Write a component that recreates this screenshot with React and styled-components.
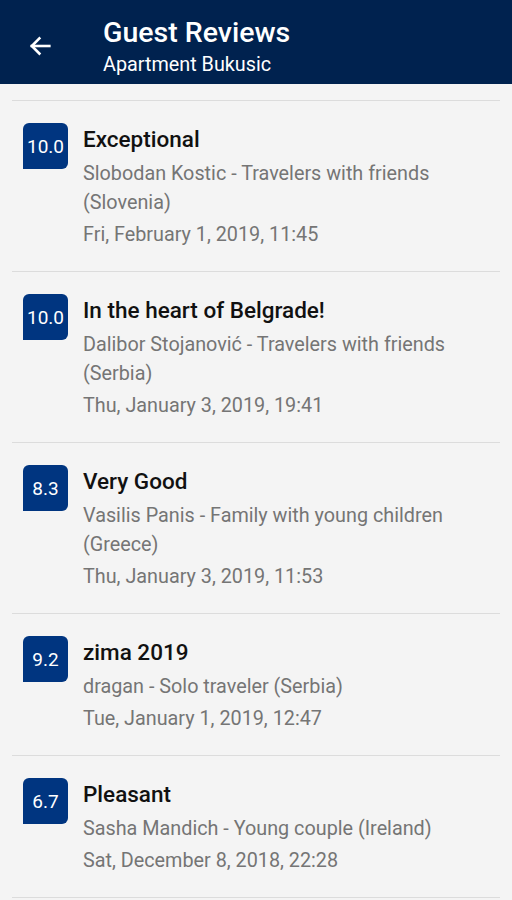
import React from "react";
import styled, { createGlobalStyle } from "styled-components";

const Global = createGlobalStyle`
  html, body { margin: 0; padding: 0; background: #f4f4f4; }
  body { font-family: Roboto, "Noto Sans", Arial, sans-serif; }
  * { box-sizing: border-box; }
`;

const Page = styled.div`
  width: 512px;
  min-height: 900px;
  background: #f4f4f4;
`;

const Header = styled.header`
  height: 84px;
  background: #00224f;
  display: flex;
  align-items: flex-start;
  color: #fff;
`;

const BackButton = styled.button`
  width: 103px;
  height: 84px;
  border: 0;
  background: transparent;
  padding: 8px 0 0 26px;
  display: flex;
  align-items: center;
  color: #fff;
`;

const TitleBlock = styled.div`
  display: flex;
  flex-direction: column;
  padding-top: 17px;
`;

const Title = styled.h1`
  margin: 0;
  font-size: 28.5px;
  font-weight: 500;
  line-height: 32px;
`;

const Subtitle = styled.div`
  font-size: 19.8px;
  line-height: 26px;
  margin-top: 3px;
`;

const List = styled.div`
  margin: 16px 12px 0;
  border-top: 1px solid #dcdcdc;
`;

const Row = styled.div`
  display: flex;
  gap: 15px;
  padding: 21px 12px 21px 11px;
  border-bottom: 1px solid #dcdcdc;
`;

const Badge = styled.div`
  flex: 0 0 45px;
  width: 45px;
  height: 46px;
  background: #003580;
  color: #fff;
  border-radius: 6px 6px 6px 0;
  display: flex;
  align-items: center;
  justify-content: center;
  font-size: 19px;
  margin-top: 1px;
`;

const Body = styled.div`
  flex: 1;
  display: flex;
  flex-direction: column;
`;

const ReviewTitle = styled.div`
  font-size: 22.5px;
  font-weight: 500;
  color: #111;
  line-height: 34px;
`;

const Guest = styled.div`
  font-size: 19.8px;
  color: #757575;
  line-height: 29px;
  margin-top: 3px;
`;

const DateLine = styled.div`
  font-size: 19.8px;
  color: #757575;
  line-height: 30px;
  margin-top: 3px;
`;

const reviews = [
  { score: "10.0", title: "Exceptional", who: "Slobodan Kostic - Travelers with friends (Slovenia)", date: "Fri, February 1, 2019, 11:45" },
  { score: "10.0", title: "In the heart of Belgrade!", who: "Dalibor Stojanović - Travelers with friends (Serbia)", date: "Thu, January 3, 2019, 19:41" },
  { score: "8.3", title: "Very Good", who: "Vasilis Panis - Family with young children (Greece)", date: "Thu, January 3, 2019, 11:53" },
  { score: "9.2", title: "zima 2019", who: "dragan - Solo traveler (Serbia)", date: "Tue, January 1, 2019, 12:47" },
  { score: "6.7", title: "Pleasant", who: "Sasha Mandich - Young couple (Ireland)", date: "Sat, December 8, 2018, 22:28" },
];

export default function App() {
  return (
    <Page>
      <Global />
      <Header>
        <BackButton aria-label="Back">
          <svg width="28" height="28" viewBox="0 0 24 24" fill="none" stroke="#fff" strokeWidth="2.2" strokeLinecap="square">
            <path d="M20 12H5" />
            <path d="M11.5 5.5L5 12l6.5 6.5" />
          </svg>
        </BackButton>
        <TitleBlock>
          <Title>Guest Reviews</Title>
          <Subtitle>Apartment Bukusic</Subtitle>
        </TitleBlock>
      </Header>
      <List>
        {reviews.map((r, i) => (
          <Row key={i}>
            <Badge>{r.score}</Badge>
            <Body>
              <ReviewTitle>{r.title}</ReviewTitle>
              <Guest>{r.who}</Guest>
              <DateLine>{r.date}</DateLine>
            </Body>
          </Row>
        ))}
      </List>
    </Page>
  );
}
